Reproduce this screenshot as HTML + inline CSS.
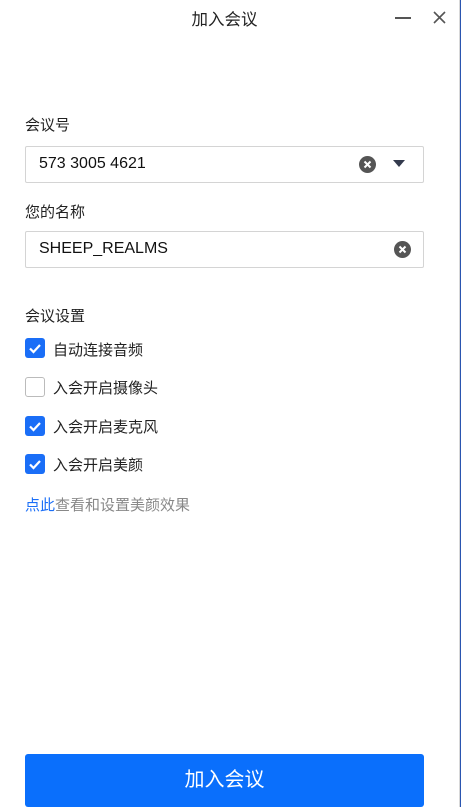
<!DOCTYPE html>
<html><head><meta charset="utf-8"><style>
*{margin:0;padding:0;box-sizing:border-box}
body{width:461px;height:807px;background:#fff;position:relative;overflow:hidden;font-family:"Liberation Sans","Noto Sans CJK SC",sans-serif;color:#222}
.a{position:absolute}
.title{left:0;width:449px;text-align:center;top:6px;font-size:16.5px;color:#222}
.lbl{left:25px;font-size:15px}
.inp{left:25px;width:399px;height:37px;border:1px solid #d4d4d4;border-radius:2px}
.inp span{position:absolute;left:13px;top:8px;font-size:16px;color:#111}
.clr{position:absolute;width:17px;height:17px;border-radius:50%;background:#555;top:9px}
.cb{left:25px;width:20px;height:20px;border-radius:3px;background:#1a6ef7}
.cb.off{background:#fff;border:1px solid #bbb}
.ct{left:53px;font-size:15px}
</style></head><body>
<div class="a title">加入会议</div>
<div class="a" style="left:395px;top:17px;width:16px;height:2px;background:#555"></div>
<svg class="a" style="left:433px;top:11px" width="13" height="13"><path d="M1 1L12 12M12 1L1 12" stroke="#555" stroke-width="1.6"/></svg>
<div class="a" style="left:459px;top:0;width:1px;height:807px;background:#d8d8d8"></div>
<div class="a" style="left:460px;top:0;width:1px;height:807px;background:#2a55b0"></div>

<div class="a lbl" style="top:114px">会议号</div>
<div class="a inp" style="top:146px"><span>573 3005 4621</span>
<div class="clr" style="left:333px"><svg width="17" height="17"><path d="M5.5 5.5L11.5 11.5M11.5 5.5L5.5 11.5" stroke="#fff" stroke-width="2"/></svg></div>
<svg style="position:absolute;left:367px;top:13px" width="12" height="8"><path d="M0 0H12L6 7Z" fill="#333a4d"/></svg></div>

<div class="a lbl" style="top:201px">您的名称</div>
<div class="a inp" style="top:231px"><span>SHEEP_REALMS</span>
<div class="clr" style="left:368px"><svg width="17" height="17"><path d="M5.5 5.5L11.5 11.5M11.5 5.5L5.5 11.5" stroke="#fff" stroke-width="2"/></svg></div></div>

<div class="a lbl" style="top:305px">会议设置</div>
<svg width="0" height="0" style="position:absolute"><defs><path id="ck" d="M5 10.5L8.5 14L15 7" stroke="#fff" stroke-width="2.2" fill="none"/></defs></svg>
<div class="a cb" style="top:338px"><svg width="20" height="20"><use href="#ck"/></svg></div>
<div class="a ct" style="top:339px">自动连接音频</div>
<div class="a cb off" style="top:377px"></div>
<div class="a ct" style="top:377px">入会开启摄像头</div>
<div class="a cb" style="top:416px"><svg width="20" height="20"><use href="#ck"/></svg></div>
<div class="a ct" style="top:416px">入会开启麦克风</div>
<div class="a cb" style="top:454px"><svg width="20" height="20"><use href="#ck"/></svg></div>
<div class="a ct" style="top:454px">入会开启美颜</div>
<div class="a" style="left:25px;top:494px;font-size:15px;color:#888"><span style="color:#1a6ef7">点此</span>查看和设置美颜效果</div>

<div class="a" style="left:25px;top:754px;width:399px;height:53px;background:#0a6ffc;border-radius:3px;color:#fff;font-size:20px;text-align:center;line-height:52px">加入会议</div>
</body></html>
